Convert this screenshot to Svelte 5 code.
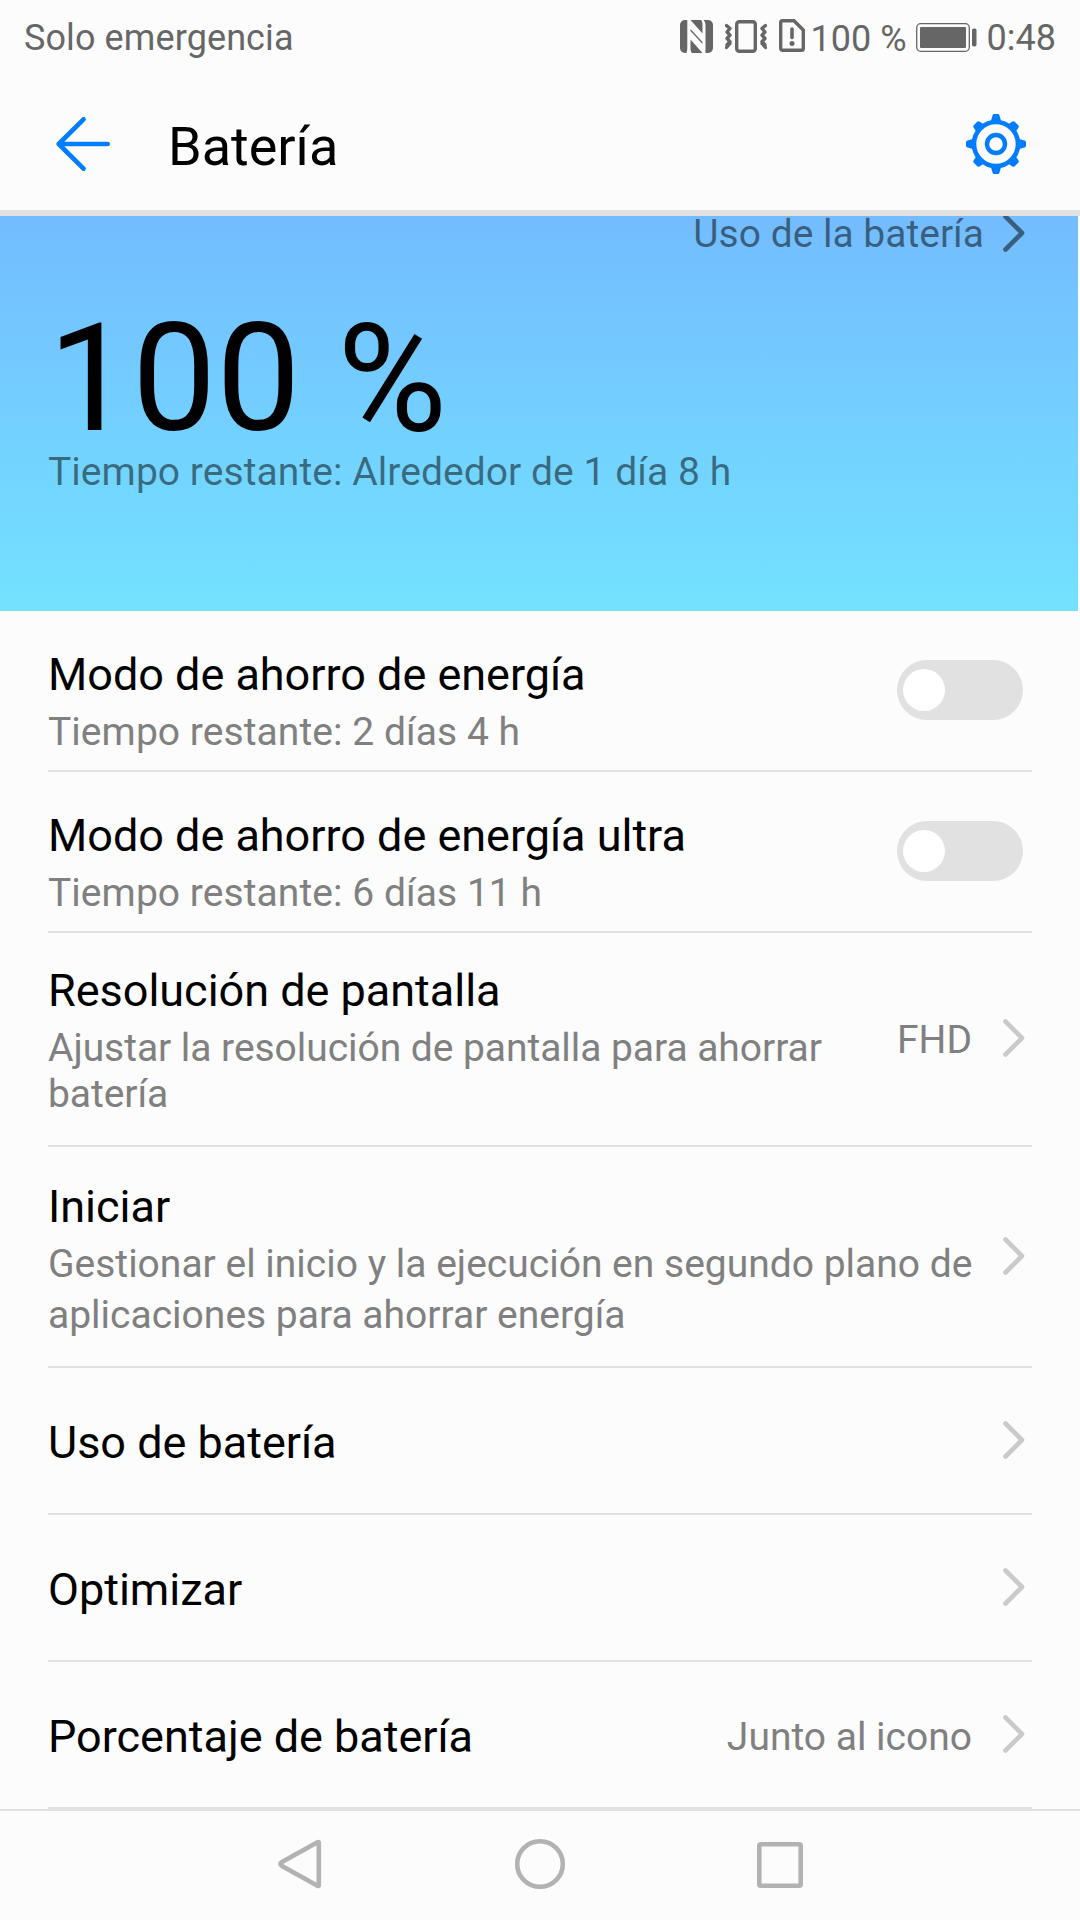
<script lang="ts">
	type Row = {
		id: string;
		title: string;
		summary?: string;
		value?: string;
		toggle?: boolean;
	};

	const rows: Row[] = [
		{ id: 'saver', title: 'Modo de ahorro de energía', summary: 'Tiempo restante: 2 días 4 h', toggle: true },
		{ id: 'ultra', title: 'Modo de ahorro de energía ultra', summary: 'Tiempo restante: 6 días 11 h', toggle: true },
		{
			id: 'resolution',
			title: 'Resolución de pantalla',
			summary: 'Ajustar la resolución de pantalla para ahorrar batería',
			value: 'FHD'
		},
		{
			id: 'launch',
			title: 'Iniciar',
			summary: 'Gestionar el inicio y la ejecución en segundo plano de aplicaciones para ahorrar energía'
		},
		{ id: 'usage', title: 'Uso de batería' },
		{ id: 'optimize', title: 'Optimizar' },
		{ id: 'percentage', title: 'Porcentaje de batería', value: 'Junto al icono' }
	];

	let enabled: Record<string, boolean> = $state({ saver: false, ultra: false });
</script>

{#snippet chevron()}
	<svg class="chevron" width="22" height="38" viewBox="0 0 22 38" aria-hidden="true">
		<path d="M2.5 2.5 19 19 2.5 35.5" />
	</svg>
{/snippet}

<div class="screen">
	<div class="status">
		<span class="carrier">Solo emergencia</span>
		<svg class="nfc" width="33" height="33" viewBox="0 0 33 33">
			<rect width="33" height="33" rx="5" fill="#666" />
			<path
				d="M6.500 33C7 31.500 7.300 30 7.300 27V0H10.500L22.500 13.500V5C22.500 2.500 22 1 21 0H23.500C25 1.500 25.500 3 25.500 6V33H22.500L10.500 19.500V28C10.500 30.500 11 32 12 33Z"
				fill="#fcfcfc"
			/>
			<path d="M10.500 9 22.500 22V24L10.500 11Z" fill="#666" />
		</svg>
		<svg class="vibrate" width="42" height="33" viewBox="0 0 42 33" fill="none" stroke="#666">
			<rect x="11.700" y="1.700" width="18.600" height="29.600" rx="2.500" stroke-width="3.400" />
			<path
				d="M1.500 5.500 5 8.500 2 12 5 15.200 2 18.500 5 21.700 2 25l3-1.500L1.500 27.500M40.500 5.500 37 8.500 40 12 37 15.200 40 18.500 37 21.700 40 25l-3-1.500 3.500 4"
				stroke-width="3.400"
				stroke-linejoin="round"
				stroke-linecap="round"
			/>
		</svg>
		<svg class="sim" width="26" height="33" viewBox="0 0 26 33">
			<path d="M3.500 1.700H15L24.300 11V29.500a1.800 1.800 0 0 1-1.800 1.800h-19a1.800 1.800 0 0 1-1.800-1.800v-26A1.800 1.800 0 0 1 3.500 1.700Z" fill="none" stroke="#666" stroke-width="3.400" />
			<path d="M13 10v8.500" stroke="#666" stroke-width="3.600" stroke-linecap="round" />
			<circle cx="13" cy="24.500" r="2.500" fill="#666" />
		</svg>
		<span class="percent">100 %</span>
		<svg class="battery" width="61" height="29" viewBox="0 0 61 29">
			<rect x=".7" y=".7" width="52.600" height="27.600" rx="4" fill="none" stroke="#666" stroke-width="1.300" />
			<rect x="4" y="4" width="46" height="21" rx="1" fill="#666" />
			<rect x="56" y="5.500" width="4.500" height="18" rx="1.800" fill="#666" />
		</svg>
		<span class="clock">0:48</span>
	</div>

	<header>
		<button aria-label="Atrás">
			<svg width="54" height="54" viewBox="0 0 54 54" fill="none" stroke="#007dff" stroke-width="4.600" stroke-linecap="round" stroke-linejoin="round">
				<path d="M27.500 2.300 2.700 27 27.500 51.700M2.700 27H51.700" />
			</svg>
		</button>
		<h1>Batería</h1>
		<button aria-label="Ajustes">
			<svg width="60" height="60" viewBox="-30 -30 60 60">
				{#each [0, 90, 180, 270] as angle (angle)}
					<path d="M-5.500-22-3.300-29Q-3-30-2-30H2Q3-30 3.300-29L5.500-22Z" fill="#007dff" transform="rotate({angle})" />
					<path d="M-5.500-21-4.300-27Q-4-29-2.500-29H2.500Q4-29 4.300-27L5.500-21Z" fill="#007dff" transform="rotate({angle + 45})" />
				{/each}
				<circle r="22" fill="#fcfcfc" stroke="#007dff" stroke-width="4.600" />
				<circle r="9" fill="none" stroke="#007dff" stroke-width="4.400" />
			</svg>
		</button>
	</header>

	<section class="hero">
		<div class="details">
			<span>Uso de la batería</span>
			{@render chevron()}
		</div>
		<div class="level">100 %</div>
		<div class="remaining">Tiempo restante: Alrededor de 1 día 8 h</div>
	</section>

	<main>
		{#each rows as row (row.id)}
			<div class="row {row.id}">
				<div class="text">
					<div class="title">{row.title}</div>
					{#if row.summary}
						<div class="summary">{row.summary}</div>
					{/if}
				</div>
				{#if row.toggle}
					<button
						class="switch"
						class:on={enabled[row.id]}
						role="switch"
						aria-checked={enabled[row.id]}
						aria-label={row.title}
						onclick={() => (enabled[row.id] = !enabled[row.id])}
					></button>
				{:else}
					{#if row.value}
						<span class="value">{row.value}</span>
					{/if}
					{@render chevron()}
				{/if}
			</div>
		{/each}
	</main>

	<nav>
		<svg width="52" height="52" viewBox="0 0 52 52"><path d="M44.800 4.800V47.200Q44.800 48.500 43.500 47.800L8 28Q5 26 8 24L43.500 4.200Q44.800 3.500 44.800 4.800Z" /></svg>
		<svg width="52" height="52" viewBox="0 0 52 52"><circle cx="26" cy="26" r="22.800" /></svg>
		<svg width="52" height="52" viewBox="0 0 52 52"><rect x="5.300" y="6.300" width="41.400" height="41.400" rx="1.500" /></svg>
	</nav>
</div>

<style>
	:global(body) {
		margin: 0;
		background: #fcfcfc;
	}
	.screen {
		display: flex;
		flex-direction: column;
		width: 1080px;
		height: 1920px;
		overflow: hidden;
		background: #fcfcfc;
		color: #000;
		font-family: Roboto, sans-serif;
	}
	svg {
		display: block;
		flex: none;
	}
	button {
		padding: 0;
		border: 0;
		background: none;
		cursor: pointer;
	}
	.status {
		display: flex;
		box-sizing: border-box;
		height: 78px;
		padding: 17px 24px 0;
		color: #666;
		font-size: 36px;
		line-height: 42px;
		white-space: nowrap;
	}
	.carrier {
		flex: 1;
		letter-spacing: 0.1px;
	}
	.nfc {
		margin: 3px 12px 0 0;
	}
	.vibrate {
		margin: 3px 12px 0 0;
	}
	.sim {
		margin: 2px 6px 0 0;
	}
	.percent {
		width: 95px;
		margin-top: 1px;
	}
	.battery {
		margin: 6px 10px 0 10px;
	}
	header {
		display: flex;
		align-items: center;
		flex: none;
		height: 132px;
		padding: 0 54px 0 56px;
		border-bottom: 6px solid #e1e1e1;
	}
	h1 {
		flex: 1;
		margin: 6px 0 0 58px;
		font-size: 54px;
		font-weight: 400;
		line-height: 64px;
	}
	.hero {
		flex: none;
		width: 1078px;
		height: 395px;
		overflow: hidden;
		background: linear-gradient(#73bcff, #73e2ff);
	}
	.details {
		display: flex;
		align-items: center;
		justify-content: flex-end;
		gap: 19px;
		height: 46px;
		margin-top: -5px;
		padding-right: 53px;
		color: rgba(0, 0, 0, 0.5);
		font-size: 39px;
		line-height: 46px;
	}
	.level {
		margin-top: 46px;
		padding-left: 48px;
		font-size: 150px;
		letter-spacing: -0.2px;
		line-height: 152px;
	}
	.remaining {
		margin-top: -6px;
		padding-left: 48px;
		color: rgba(0, 0, 0, 0.5);
		font-size: 39px;
		letter-spacing: 0.06px;
		line-height: 46px;
	}
	main {
		flex: none;
		padding: 0 48px;
	}
	.row {
		display: flex;
		align-items: center;
		box-sizing: border-box;
		height: 147px;
		padding-right: 7px;
		border-bottom: 2px solid #e1e1e1;
	}
	.text {
		flex: 1;
		align-self: flex-start;
		padding-top: 48px;
	}
	.title {
		font-size: 45px;
		letter-spacing: -0.02px;
		line-height: 54px;
	}
	.summary {
		margin-top: 7px;
		color: #808080;
		font-size: 39px;
		line-height: 46px;
	}
	.saver,
	.ultra {
		height: 161px;
		padding-right: 9px;
	}
	.saver .text,
	.ultra .text {
		padding-top: 37px;
	}
	.saver .summary,
	.ultra .summary {
		letter-spacing: 0.06px;
	}
	.resolution {
		height: 214px;
	}
	.resolution .text {
		padding-top: 31px;
	}
	.resolution .summary {
		letter-spacing: -0.05px;
	}
	.resolution .value {
		margin-left: 60px;
		margin-top: 1px;
	}
	.launch {
		height: 221px;
	}
	.launch .text {
		padding-top: 33px;
	}
	.launch .summary {
		margin-top: 5px;
		line-height: 51px;
	}
	.value {
		margin-top: 4px;
		color: #808080;
		font-size: 39px;
		line-height: 46px;
		white-space: nowrap;
	}
	.chevron {
		fill: none;
		stroke: #cacaca;
		stroke-width: 4.6;
		stroke-linecap: round;
		stroke-linejoin: round;
	}
	.row .chevron {
		margin: 0 0 1px 24px;
	}
	.value + :global(.chevron) {
		margin-left: 31px;
	}
	.resolution .chevron {
		margin-bottom: 3px;
	}
	.details .chevron {
		margin-bottom: 2px;
		stroke: rgba(0, 0, 0, 0.5);
	}
	.switch {
		display: flex;
		flex: none;
		box-sizing: border-box;
		width: 126px;
		height: 60px;
		margin-bottom: 1px;
		padding: 9px 6px;
		border-radius: 30px;
		background: #e1e1e1;
	}
	.switch::before {
		content: '';
		width: 42px;
		height: 42px;
		border-radius: 50%;
		background: #fff;
	}
	.switch.on {
		justify-content: flex-end;
		background: #007dff;
	}
	nav {
		display: flex;
		justify-content: center;
		gap: 188px;
		flex: 1;
		padding-top: 27px;
		border-top: 2px solid #e1e1e1;
	}
	nav svg {
		fill: none;
		stroke: #b2b2b2;
		stroke-width: 4.6;
	}
</style>
